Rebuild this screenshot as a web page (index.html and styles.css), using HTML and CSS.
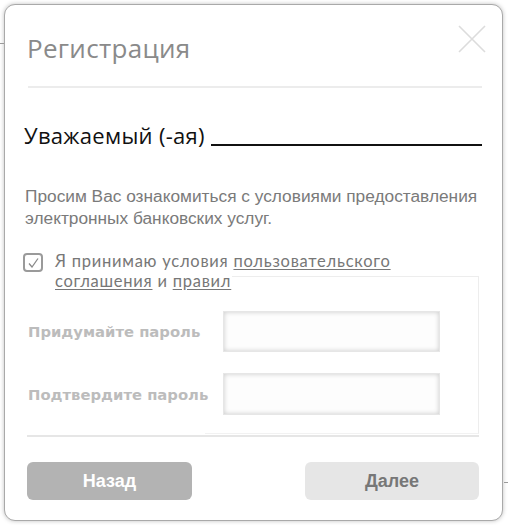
FILE: index.html
```html
<!DOCTYPE html>
<html lang="ru">
<head>
<meta charset="utf-8">
<title>Регистрация</title>
<link rel="stylesheet" href="styles.css">
</head>
<body>
<div class="page">
  <span class="tick tick-left"></span>
  <div class="modal">
    <div class="header">
      <h1 class="title">Регистрация</h1>
      <svg class="close" width="28" height="28" viewBox="0 0 28 28" aria-label="Закрыть">
        <path d="M1 1 L27 27 M27 1 L1 27" stroke="#dcdcdc" stroke-width="1.6" fill="none"/>
      </svg>
    </div>
    <div class="divider"></div>
    <div class="greeting">
      <span>Уважаемый (-ая)</span>
      <span class="blank"></span>
    </div>
    <p class="intro">Просим Вас ознакомиться с условиями предоставления электронных банковских услуг.</p>
    <div class="form-area">
      <div class="agree">
        <span class="checkbox">
          <svg width="11" height="10" viewBox="0 0 11 10"><path d="M1 5.5 L4 9 L10 0.5" stroke="#8a8a8a" stroke-width="1.3" fill="none"/></svg>
        </span>
        <p class="agree-text">Я принимаю условия <a href="#">пользовательского</a> <a href="#">соглашения</a> и <a href="#">правил</a></p>
      </div>
      <div class="row">
        <label class="label">Придумайте пароль</label>
        <span class="input"></span>
      </div>
      <div class="row">
        <label class="label">Подтвердите пароль</label>
        <span class="input"></span>
      </div>
    </div>
    <div class="divider divider-bottom"></div>
    <div class="actions">
      <button class="btn btn-back">Назад</button>
      <button class="btn btn-next">Далее</button>
    </div>
  </div>
  <span class="tick tick-right"></span>
</div>
</body>
</html>
```
FILE: styles.css
```css
html, body {
  margin: 0;
  padding: 0;
  background: #ffffff;
}
.page {
  position: relative;
  width: 508px;
  height: 525px;
  padding: 4px 5px 4px 4px;
  box-sizing: border-box;
}
.tick {
  position: absolute;
  height: 1px;
  width: 4px;
  background: #9a9a9a;
}
.tick-left { left: 0; top: 43px; }
.tick-right { right: 0; top: 482px; }
.modal {
  box-sizing: border-box;
  width: 499px;
  height: 517px;
  border: 1px solid #a9a9a9;
  border-radius: 11px;
  box-shadow: 0 0 4px rgba(0,0,0,0.25);
  background: #fff;
  padding: 20px 24px 0 22px;
  font-family: "Open Sans", "DejaVu Sans", sans-serif;
}
.header {
  display: flex;
  justify-content: space-between;
  align-items: flex-start;
  height: 61px;
}
.title {
  margin: 8px 0 0 0;
  font-size: 26px;
  font-weight: 400;
  color: #8a8a8a;
  line-height: 30px;
  letter-spacing: 0.3px;
}
.close {
  margin: 0 -8px 0 0;
  display: block;
}
.divider {
  height: 2px;
  background: #ececec;
  margin-left: 1px;
  margin-right: -4px;
}
.greeting {
  display: flex;
  align-items: flex-end;
  margin: 33px 0 0 -3px;
  font-size: 22px;
  line-height: 28px;
  color: #111;
  letter-spacing: 0.3px;
}
.blank {
  flex: 1;
  margin-left: 6px;
  margin-right: -4px;
  border-bottom: 2px solid #111;
  margin-bottom: 3px;
}
.intro {
  margin: 36px -6px 0 -2px;
  font-family: "Liberation Sans", Arial, sans-serif;
  font-size: 17.3px;
  line-height: 22px;
  color: #7a7a7a;
}
.form-area {
  position: relative;
  margin-top: 22px;
  padding-bottom: 20px;
}
.form-area::before {
  content: "";
  position: absolute;
  left: 178px;
  right: -1px;
  top: 25px;
  bottom: 1px;
  border-right: 1px solid #ededed;
  border-bottom: 1px solid #f2f2f2;
}
.form-area::after {
  content: "";
  position: absolute;
  left: 205px;
  right: -1px;
  top: 25px;
  height: 1px;
  background: #ededed;
}
.agree {
  display: flex;
  align-items: flex-start;
  gap: 12px;
  margin-left: -4px;
}
.checkbox {
  box-sizing: border-box;
  width: 20px;
  height: 19px;
  border: 2px solid #9a9a9a;
  border-radius: 4px;
  display: flex;
  align-items: center;
  justify-content: center;
  margin-top: 2px;
  flex: none;
}
.agree-text {
  margin: 0;
  font-family: "Lato", "Open Sans", sans-serif;
  font-size: 16.5px;
  line-height: 20px;
  color: #777;
  letter-spacing: 0.75px;
  width: 360px;
}
.agree-text a {
  color: #777;
  text-decoration: underline;
  text-underline-offset: 2px;
}
.row {
  position: relative;
  display: flex;
  align-items: center;
  height: 41px;
}
.agree + .row {
  margin-top: 20px;
}
.row + .row {
  margin-top: 21px;
  height: 42px;
}
.label {
  box-sizing: border-box;
  width: 196px;
  padding-left: 1px;
  font-family: "DejaVu Sans", Verdana, sans-serif;
  font-weight: 700;
  font-size: 14.8px;
  color: #bcbcbc;
}
.input {
  box-sizing: border-box;
  width: 217px;
  height: 100%;
  background: #fdfdfd;
  border: 1px solid #e6e6e6;
  box-shadow: inset 0 0 5px rgba(0,0,0,0.2);
}
.divider-bottom {
  height: 2px;
  background: #e6e6e6;
  margin-left: 0;
  margin-right: -1px;
}
.actions {
  display: flex;
  justify-content: space-between;
  margin-top: 25px;
  margin-left: 0;
  margin-right: -1px;
}
.btn {
  height: 38px;
  border: none;
  border-radius: 6px;
  font-family: "Liberation Sans", Arial, sans-serif;
  font-weight: 700;
  font-size: 18px;
  padding: 0;
}
.btn-back {
  width: 165px;
  background: #b3b3b3;
  color: #fff;
}
.btn-next {
  width: 174px;
  background: #e6e6e6;
  color: #777;
}
```
